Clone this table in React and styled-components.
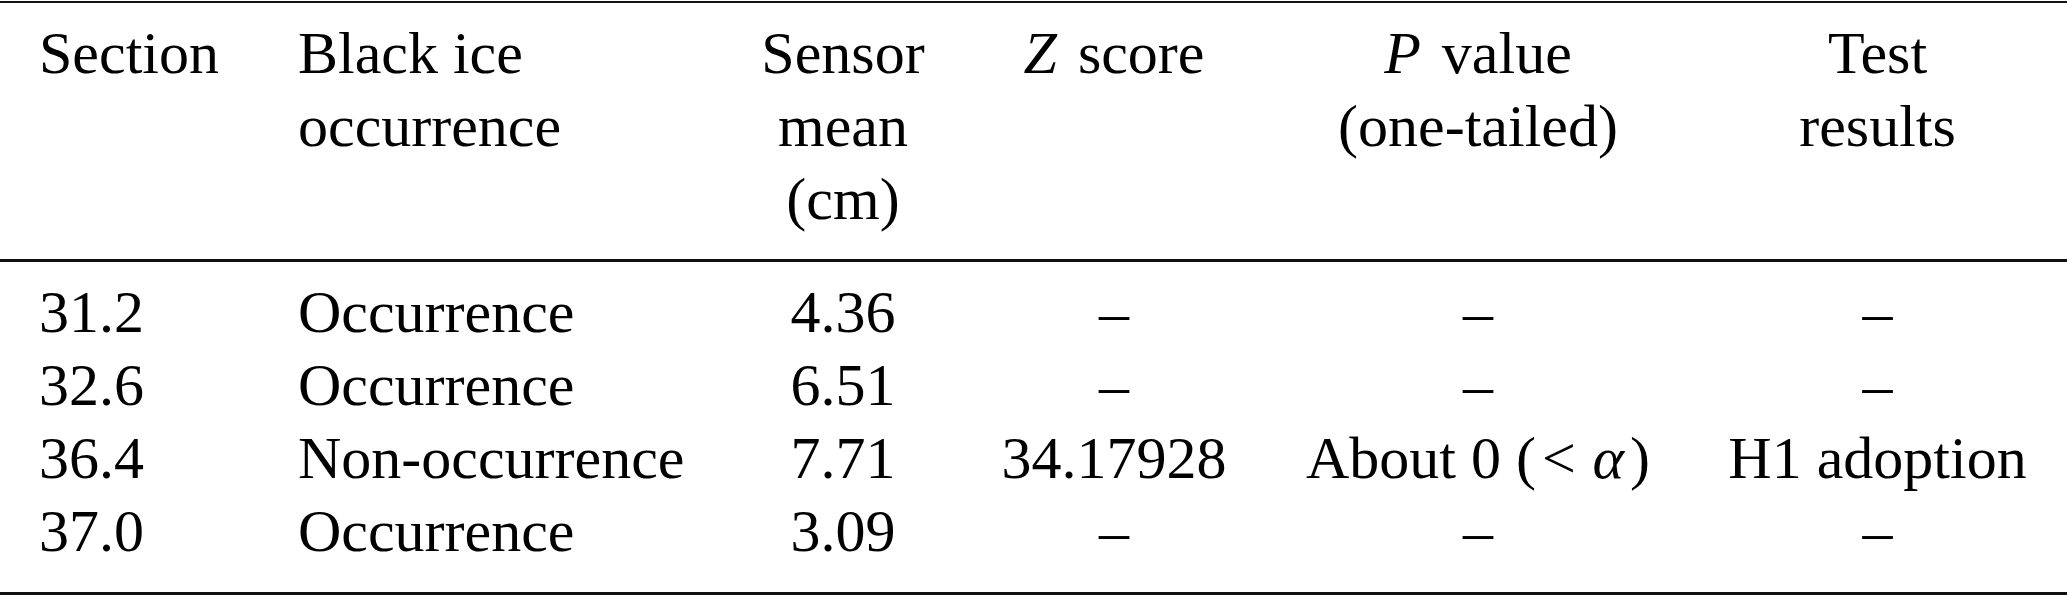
import styled, { createGlobalStyle } from 'styled-components'

const GlobalStyle = createGlobalStyle`
  html, body {
    margin: 0;
    padding: 0;
    background: #ffffff;
  }
`;

const columns = "298px 425px 240px 302px 426px 373px";

const Page = styled.div`
  width: 2067px;
  height: 595px;
  padding-top: 1px;
  box-sizing: border-box;
  overflow: hidden;
`;

const Table = styled.div`
  font-family: "Liberation Serif", "Times New Roman", serif;
  font-size: 60px;
  line-height: 73px;
  color: #000;
`;

const Head = styled.div`
  display: grid;
  grid-template-columns: ${columns};
  padding: 14px 0 23px;
  border-top: 2px solid #111;
  border-bottom: 3px solid #111;
`;

const Body = styled.div`
  display: grid;
  grid-template-columns: ${columns};
  padding: 14px 0 24px;
  border-bottom: 3px solid #111;
`;

const Cell = styled.div`
  text-align: ${(props) => props.$align};
  padding-left: ${(props) => (props.$first ? "39px" : "0")};
  white-space: nowrap;
`;

const Line = styled.div``;

const Var = styled.i`
  font-style: italic;
  margin-right: 0.1em;
`;

const Rel = styled.span`
  margin: 0 0.28em 0 0.1em;
`;

const head = [
  { align: "left", lines: ["Section"] },
  { align: "left", lines: ["Black ice", "occurrence"] },
  { align: "center", lines: ["Sensor", "mean", "(cm)"] },
  { align: "center", lines: [<><Var>Z</Var> score</>] },
  { align: "center", lines: [<><Var>P</Var> value</>, "(one-tailed)"] },
  { align: "center", lines: ["Test", "results"] },
];

const rows = [
  ["31.2", "Occurrence", "4.36", "–", "–", "–"],
  ["32.6", "Occurrence", "6.51", "–", "–", "–"],
  ["36.4", "Non-occurrence", "7.71", "34.17928", <>About 0 (<Rel>&lt;</Rel><Var>α</Var>)</>, "H1 adoption"],
  ["37.0", "Occurrence", "3.09", "–", "–", "–"],
];

const aligns = ["left", "left", "center", "center", "center", "center"];

const App = () => {
  return (
    <>
      <GlobalStyle />
      <Page>
        <Table>
          <Head>
            {head.map((col, i) => (
              <Cell key={i} $align={col.align} $first={i === 0}>
                {col.lines.map((line, j) => (
                  <Line key={j}>{line}</Line>
                ))}
              </Cell>
            ))}
          </Head>
          <Body>
            {rows.map((row, r) =>
              row.map((value, c) => (
                <Cell key={`${r}-${c}`} $align={aligns[c]} $first={c === 0}>
                  {value}
                </Cell>
              ))
            )}
          </Body>
        </Table>
      </Page>
    </>
  );
}

export default App
